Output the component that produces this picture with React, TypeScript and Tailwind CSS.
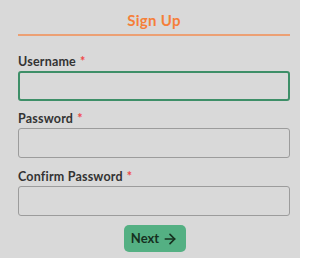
import { ArrowRight } from "lucide-react";

const fields = [
  { label: "Username", active: true, gap: "mt-[18px]" },
  { label: "Password", active: false, gap: "mt-[10px]" },
  { label: "Confirm Password", active: false, gap: "mt-[11px]" },
];

export default function App() {
  return (
    <div
      className="w-[300px] h-[258px] bg-[#d9d9d9] pl-[18px] pt-[8px] overflow-hidden"
      style={{ fontFamily: "Lato, 'Open Sans', sans-serif" }}
    >
      <div className="w-[272px]">
        {/* Header */}
        <div className="h-[24px] flex items-center justify-center text-[15px] font-bold text-[#f57f39] tracking-[0.3px]">
          Sign Up
        </div>
        <div className="h-[2px] mt-[2px] bg-[#eca074]" />

        {/* Fields */}
        {fields.map((f) => (
          <div key={f.label} className={f.gap}>
            <label className="flex items-center h-[16px] text-[12.5px] font-bold text-[#333333] tracking-[0.2px]">
              {f.label}
              <span className="ml-[4px] text-[#f04848]">*</span>
            </label>
            <input
              type={f.label === "Username" ? "text" : "password"}
              className={
                f.active
                  ? "block w-full h-[30px] mt-[1px] rounded-[3px] border-2 border-[#3e8f68] bg-[#d9d9d9] outline-none"
                  : "block w-full h-[30px] mt-[1px] rounded-[3px] border-[1.5px] border-[#9c9c9c] bg-[#d9d9d9] outline-none"
              }
            />
          </div>
        ))}

        {/* Next button */}
        <div className="flex justify-center mt-[9px] pl-[1px]">
          <button
            type="button"
            className="flex items-center gap-[3px] h-[27px] w-[62px] justify-center rounded-[5px] bg-[#54b083] text-[13px] font-bold text-[#16301f]"
          >
            Next
            <ArrowRight size={16} strokeWidth={2.5} />
          </button>
        </div>
      </div>
    </div>
  );
}
